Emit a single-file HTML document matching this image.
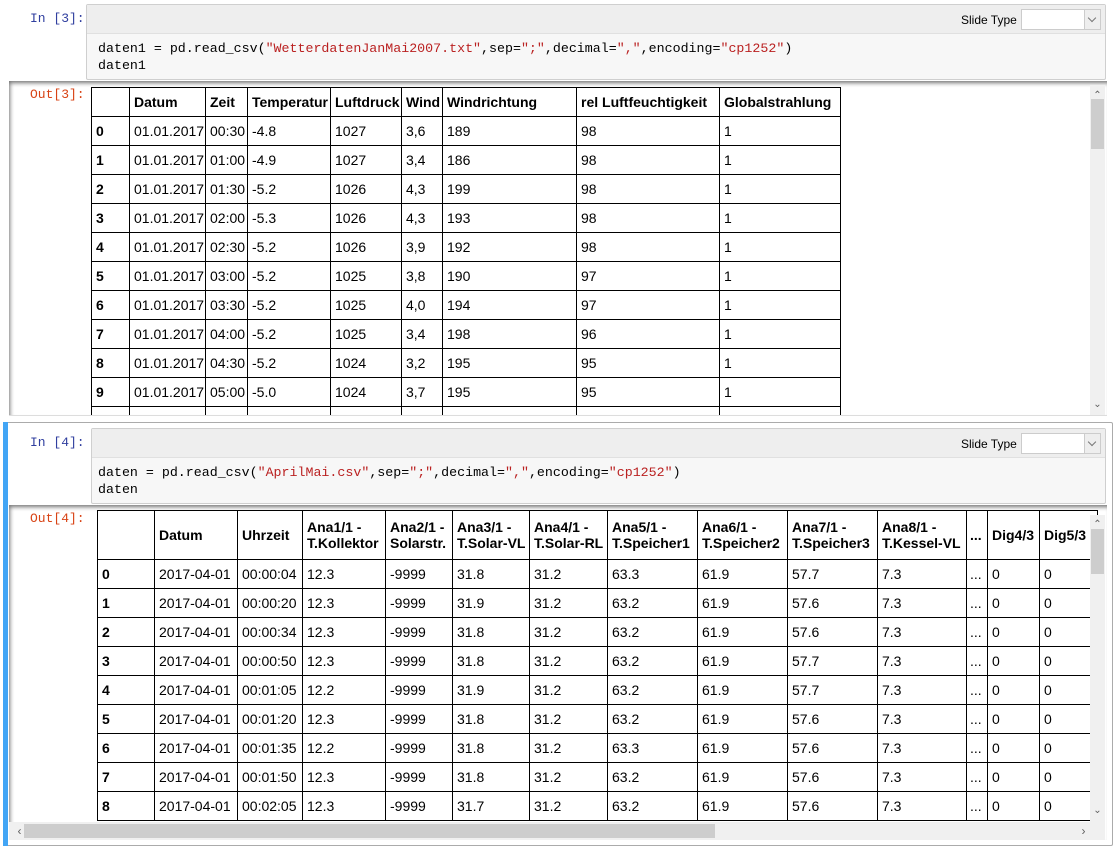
<!DOCTYPE html>
<html><head><meta charset="utf-8"><style>
*{box-sizing:border-box;margin:0;padding:0}
body{width:1119px;height:850px;background:#fff;position:relative;overflow:hidden;font-family:"Liberation Sans",Arial,sans-serif}
.abs{position:absolute}
.prompt{position:absolute;font-family:"Liberation Mono",monospace;font-size:13px}
.in{color:#303f9f}.out{color:#d84315}
.inbox{position:absolute;border:1px solid #cfcfcf;border-radius:2px;background:#f7f7f7}
.tb{position:absolute;left:0;right:0;top:0;height:29px;background:#eee;border-bottom:1px solid #e0e0e0}
.st{position:absolute;font-size:12px;color:#000;top:8px}
.sel{position:absolute;top:4px;width:80px;height:21px;background:#fff;border:1px solid #ccc}
.sel i{position:absolute;right:0;top:0;width:16px;height:19px;border-left:1px solid #ccc;background:#eee}
.sel i:after{content:"";position:absolute;left:4px;top:5px;width:5px;height:5px;border-right:1px solid #777;border-bottom:1px solid #777;transform:rotate(45deg)}
.code{position:absolute;left:11px;font-family:"Liberation Mono",monospace;font-size:13.3px;line-height:17px;color:#000;white-space:pre}
.s{color:#ba2121}
.outarea{position:absolute;overflow:hidden;background:#fff;box-shadow:inset 2px 3px 4px -1px rgba(0,0,0,.55)}
table{border-collapse:collapse;table-layout:fixed;position:absolute;font-size:14px;color:#000}
td,th{border:1px solid #000;padding:0 4px;text-align:left;white-space:nowrap;overflow:hidden;height:29px;line-height:16px}
th{font-weight:bold}
td:first-child{font-weight:bold}
.vs{position:absolute;width:15px;background:#f0f0f0}
.vs b{position:absolute;left:1px;width:13px;background:#cdcdcd}
.arr{position:absolute;font-size:10px;color:#606060;width:15px;text-align:center}
</style></head><body>

<!-- Cell 1 -->
<div class="prompt in" style="left:30px;top:11px">In [3]:</div>
<div class="inbox" style="left:86px;top:4px;width:1020px;height:76px">
  <div class="tb"><span class="st" style="left:874px">Slide Type</span><div class="sel" style="left:934px"><i></i></div></div>
  <div class="code" style="top:35px">daten1 = pd.read_csv(<span class="s">"WetterdatenJanMai2007.txt"</span>,sep=<span class="s">";"</span>,decimal=<span class="s">","</span>,encoding=<span class="s">"cp1252"</span>)
daten1</div>
</div>
<div class="outarea" style="left:9px;top:81px;width:1098px;height:335px;border-bottom:1px solid #ddd">
  <div class="prompt out" style="left:21px;top:6px">Out[3]:</div>
  <table style="left:82px;top:6px;width:750px">
    <colgroup><col style="width:38px"><col style="width:76px"><col style="width:42px"><col style="width:83px"><col style="width:71px"><col style="width:41px"><col style="width:134px"><col style="width:143px"><col style="width:121px"></colgroup>
    <tr><th></th><th>Datum</th><th>Zeit</th><th>Temperatur</th><th>Luftdruck</th><th>Wind</th><th>Windrichtung</th><th>rel Luftfeuchtigkeit</th><th>Globalstrahlung</th></tr>
    <tr><td>0</td><td>01.01.2017</td><td>00:30</td><td>-4.8</td><td>1027</td><td>3,6</td><td>189</td><td>98</td><td>1</td></tr>
    <tr><td>1</td><td>01.01.2017</td><td>01:00</td><td>-4.9</td><td>1027</td><td>3,4</td><td>186</td><td>98</td><td>1</td></tr>
    <tr><td>2</td><td>01.01.2017</td><td>01:30</td><td>-5.2</td><td>1026</td><td>4,3</td><td>199</td><td>98</td><td>1</td></tr>
    <tr><td>3</td><td>01.01.2017</td><td>02:00</td><td>-5.3</td><td>1026</td><td>4,3</td><td>193</td><td>98</td><td>1</td></tr>
    <tr><td>4</td><td>01.01.2017</td><td>02:30</td><td>-5.2</td><td>1026</td><td>3,9</td><td>192</td><td>98</td><td>1</td></tr>
    <tr><td>5</td><td>01.01.2017</td><td>03:00</td><td>-5.2</td><td>1025</td><td>3,8</td><td>190</td><td>97</td><td>1</td></tr>
    <tr><td>6</td><td>01.01.2017</td><td>03:30</td><td>-5.2</td><td>1025</td><td>4,0</td><td>194</td><td>97</td><td>1</td></tr>
    <tr><td>7</td><td>01.01.2017</td><td>04:00</td><td>-5.2</td><td>1025</td><td>3,4</td><td>198</td><td>96</td><td>1</td></tr>
    <tr><td>8</td><td>01.01.2017</td><td>04:30</td><td>-5.2</td><td>1024</td><td>3,2</td><td>195</td><td>95</td><td>1</td></tr>
    <tr><td>9</td><td>01.01.2017</td><td>05:00</td><td>-5.0</td><td>1024</td><td>3,7</td><td>195</td><td>95</td><td>1</td></tr>
    <tr><td>10</td><td>01.01.2017</td><td>05:30</td><td>-4.9</td><td>1024</td><td>3,3</td><td>193</td><td>94</td><td>1</td></tr>
  </table>
  <div class="vs" style="left:1081px;top:4px;height:331px"><b style="top:14px;height:50px"></b></div>
  <div class="arr" style="left:1081px;top:9px">&#8963;</div>
  <div class="arr" style="left:1081px;top:318px">&#8964;</div>
</div>

<!-- Cell 2 -->
<div class="abs" style="left:3px;top:422px;width:1110px;height:424px;border:1px solid #ababab;border-left:none;border-radius:2px"></div>
<div class="abs" style="left:3px;top:422px;width:5px;height:424px;background:#42a5f5"></div>
<div class="prompt in" style="left:30px;top:435px">In [4]:</div>
<div class="inbox" style="left:91px;top:428px;width:1015px;height:76px">
  <div class="tb"><span class="st" style="left:869px">Slide Type</span><div class="sel" style="left:929px"><i></i></div></div>
  <div class="code" style="top:35px;left:6px">daten = pd.read_csv(<span class="s">"AprilMai.csv"</span>,sep=<span class="s">";"</span>,decimal=<span class="s">","</span>,encoding=<span class="s">"cp1252"</span>)
daten</div>
</div>
<div class="outarea" style="left:9px;top:505px;width:1098px;height:335px">
  <div class="prompt out" style="left:21px;top:6px">Out[4]:</div>
  <table style="left:88px;top:5px;width:1000px">
    <colgroup><col style="width:57px"><col style="width:83px"><col style="width:65px"><col style="width:83px"><col style="width:67px"><col style="width:77px"><col style="width:78px"><col style="width:90px"><col style="width:90px"><col style="width:90px"><col style="width:89px"><col style="width:21px"><col style="width:52px"><col style="width:58px"></colgroup>
    <tr style="height:49px"><th></th><th>Datum</th><th>Uhrzeit</th><th>Ana1/1 -<br>T.Kollektor</th><th>Ana2/1 -<br>Solarstr.</th><th>Ana3/1 -<br>T.Solar-VL</th><th>Ana4/1 -<br>T.Solar-RL</th><th>Ana5/1 -<br>T.Speicher1</th><th>Ana6/1 -<br>T.Speicher2</th><th>Ana7/1 -<br>T.Speicher3</th><th>Ana8/1 -<br>T.Kessel-VL</th><th style="padding:0 3px">...</th><th>Dig4/3</th><th>Dig5/3</th></tr>
    <tr><td>0</td><td>2017-04-01</td><td>00:00:04</td><td>12.3</td><td>-9999</td><td>31.8</td><td>31.2</td><td>63.3</td><td>61.9</td><td>57.7</td><td>7.3</td><td style="font-weight:normal;padding:0 3px">...</td><td>0</td><td>0</td></tr>
    <tr><td>1</td><td>2017-04-01</td><td>00:00:20</td><td>12.3</td><td>-9999</td><td>31.9</td><td>31.2</td><td>63.2</td><td>61.9</td><td>57.6</td><td>7.3</td><td style="font-weight:normal;padding:0 3px">...</td><td>0</td><td>0</td></tr>
    <tr><td>2</td><td>2017-04-01</td><td>00:00:34</td><td>12.3</td><td>-9999</td><td>31.8</td><td>31.2</td><td>63.2</td><td>61.9</td><td>57.6</td><td>7.3</td><td style="font-weight:normal;padding:0 3px">...</td><td>0</td><td>0</td></tr>
    <tr><td>3</td><td>2017-04-01</td><td>00:00:50</td><td>12.3</td><td>-9999</td><td>31.8</td><td>31.2</td><td>63.2</td><td>61.9</td><td>57.7</td><td>7.3</td><td style="font-weight:normal;padding:0 3px">...</td><td>0</td><td>0</td></tr>
    <tr><td>4</td><td>2017-04-01</td><td>00:01:05</td><td>12.2</td><td>-9999</td><td>31.9</td><td>31.2</td><td>63.2</td><td>61.9</td><td>57.7</td><td>7.3</td><td style="font-weight:normal;padding:0 3px">...</td><td>0</td><td>0</td></tr>
    <tr><td>5</td><td>2017-04-01</td><td>00:01:20</td><td>12.3</td><td>-9999</td><td>31.8</td><td>31.2</td><td>63.2</td><td>61.9</td><td>57.6</td><td>7.3</td><td style="font-weight:normal;padding:0 3px">...</td><td>0</td><td>0</td></tr>
    <tr><td>6</td><td>2017-04-01</td><td>00:01:35</td><td>12.2</td><td>-9999</td><td>31.8</td><td>31.2</td><td>63.3</td><td>61.9</td><td>57.6</td><td>7.3</td><td style="font-weight:normal;padding:0 3px">...</td><td>0</td><td>0</td></tr>
    <tr><td>7</td><td>2017-04-01</td><td>00:01:50</td><td>12.3</td><td>-9999</td><td>31.8</td><td>31.2</td><td>63.2</td><td>61.9</td><td>57.6</td><td>7.3</td><td style="font-weight:normal;padding:0 3px">...</td><td>0</td><td>0</td></tr>
    <tr><td>8</td><td>2017-04-01</td><td>00:02:05</td><td>12.3</td><td>-9999</td><td>31.7</td><td>31.2</td><td>63.2</td><td>61.9</td><td>57.6</td><td>7.3</td><td style="font-weight:normal;padding:0 3px">...</td><td>0</td><td>0</td></tr>
  </table>
  <div class="vs" style="left:1081px;top:10px;height:307px"><b style="top:14px;height:45px"></b></div>
  <div class="arr" style="left:1081px;top:14px">&#8963;</div>
  <div class="arr" style="left:1081px;top:300px">&#8964;</div>
  <div class="abs" style="left:0;top:317px;width:1096px;height:18px;background:#f0f0f0"><b class="abs" style="left:15px;top:2px;width:691px;height:14px;background:#cdcdcd"></b></div>
  <div class="arr" style="left:3px;top:319px;font-size:12px">&lsaquo;</div>
  <div class="arr" style="left:1067px;top:319px;font-size:12px">&rsaquo;</div>
</div>
</body></html>
